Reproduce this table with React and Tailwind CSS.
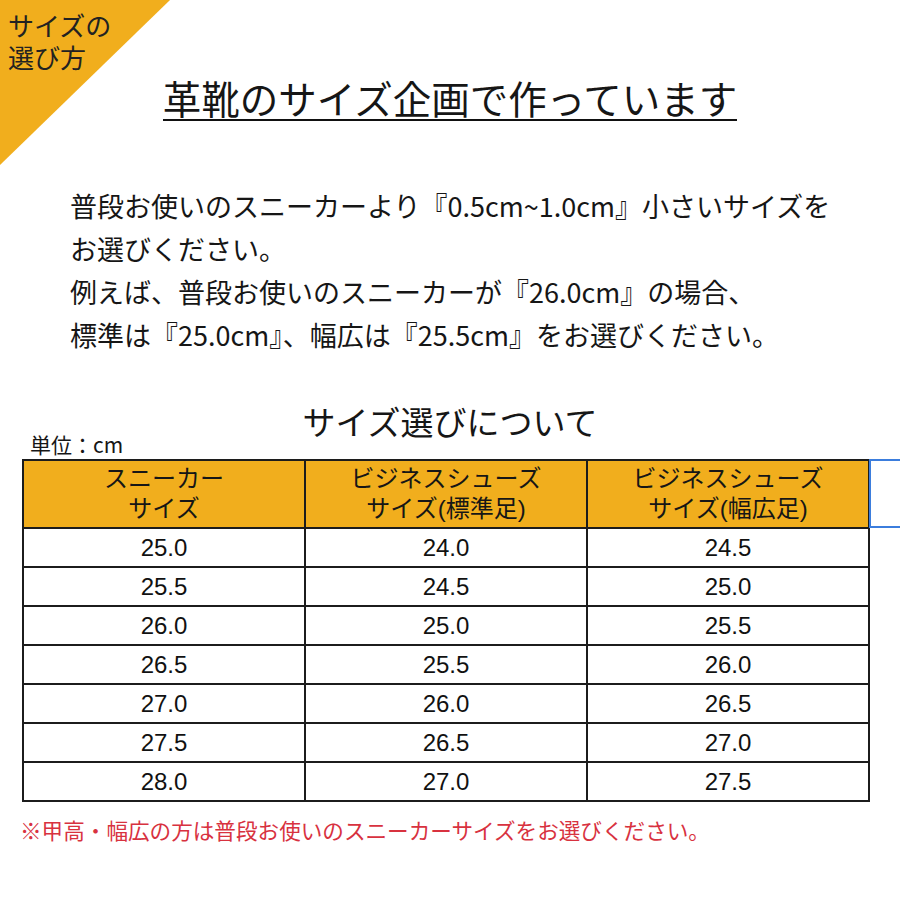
import React from "react";

const rows = [
  ["25.0", "24.0", "24.5"],
  ["25.5", "24.5", "25.0"],
  ["26.0", "25.0", "25.5"],
  ["26.5", "25.5", "26.0"],
  ["27.0", "26.0", "26.5"],
  ["27.5", "26.5", "27.0"],
  ["28.0", "27.0", "27.5"],
];

const jp = "font-['Noto_Sans_CJK_JP',sans-serif]";
const tableFont = "font-['Liberation_Sans','Noto_Sans_CJK_JP',sans-serif]";

export default function App() {
  return (
    <div className={`relative w-[900px] h-[900px] overflow-hidden bg-white text-[#161616] ${jp}`}>
      {/* corner badge */}
      <svg className="absolute left-0 top-0" width="170" height="165" viewBox="0 0 170 165">
        <polygon points="0,0 170,0 0,165" fill="#f1ae1d" />
      </svg>
      <div className="absolute left-[8px] top-[9px] text-[26px] leading-[32px] text-[#222]">
        <div>サイズの</div>
        <div>選び方</div>
      </div>

      {/* title */}
      <div className="flex justify-center pt-[75px]">
        <h1 className="text-[38.5px] leading-[44px] font-normal border-b-2 border-[#111] whitespace-nowrap">
          革靴のサイズ企画で作っています
        </h1>
      </div>

      {/* explanation */}
      <p className="pl-[70px] mt-[63px] text-[27px] leading-[43px] whitespace-nowrap">
        普段お使いのスニーカーより『0.5cm~1.0cm』小さいサイズを
        <br />
        お選びください。
        <br />
        例えば、普段お使いのスニーカーが『26.0cm』の場合、
        <br />
        標準は『25.0cm』、幅広は『25.5cm』をお選びください。
      </p>

      {/* size table */}
      <h2 className="mt-[52px] text-center text-[33px] leading-[26px] font-normal">サイズ選びについて</h2>
      <div className="pl-[30px] text-[21px] leading-[20px]">単位：cm</div>

      <div className="relative ml-[22px] mt-[5px] w-[846px]">
        <table className={`w-[846px] border-collapse table-fixed ${tableFont}`}>
          <thead>
            <tr className="bg-[#f1ae1d] h-[68px]">
              <th className="w-[282px] border-2 border-[#1c1c1c] font-normal text-[24px] leading-[30px]">
                スニーカー
                <br />
                サイズ
              </th>
              <th className="w-[282px] border-2 border-[#1c1c1c] font-normal text-[24px] leading-[30px]">
                ビジネスシューズ
                <br />
                サイズ(標準足)
              </th>
              <th className="w-[282px] border-2 border-[#1c1c1c] font-normal text-[24px] leading-[30px]">
                ビジネスシューズ
                <br />
                サイズ(幅広足)
              </th>
            </tr>
          </thead>
          <tbody>
            {rows.map((r, i) => (
              <tr key={i} className="h-[39px]">
                {r.map((v, j) => (
                  <td key={j} className="border-2 border-[#1c1c1c] text-center text-[24px] leading-[28px] text-[#111]">
                    {v}
                  </td>
                ))}
              </tr>
            ))}
          </tbody>
        </table>
        {/* spreadsheet selection outline */}
        <div className="absolute left-[847px] top-0 w-[60px] h-[69px] border-2 border-[#3b7ddd]" />
      </div>

      <p className="pl-[20px] mt-[14px] text-[21.6px] leading-[28px] text-[#d8323f] whitespace-nowrap">
        ※甲高・幅広の方は普段お使いのスニーカーサイズをお選びください。
      </p>
    </div>
  );
}
